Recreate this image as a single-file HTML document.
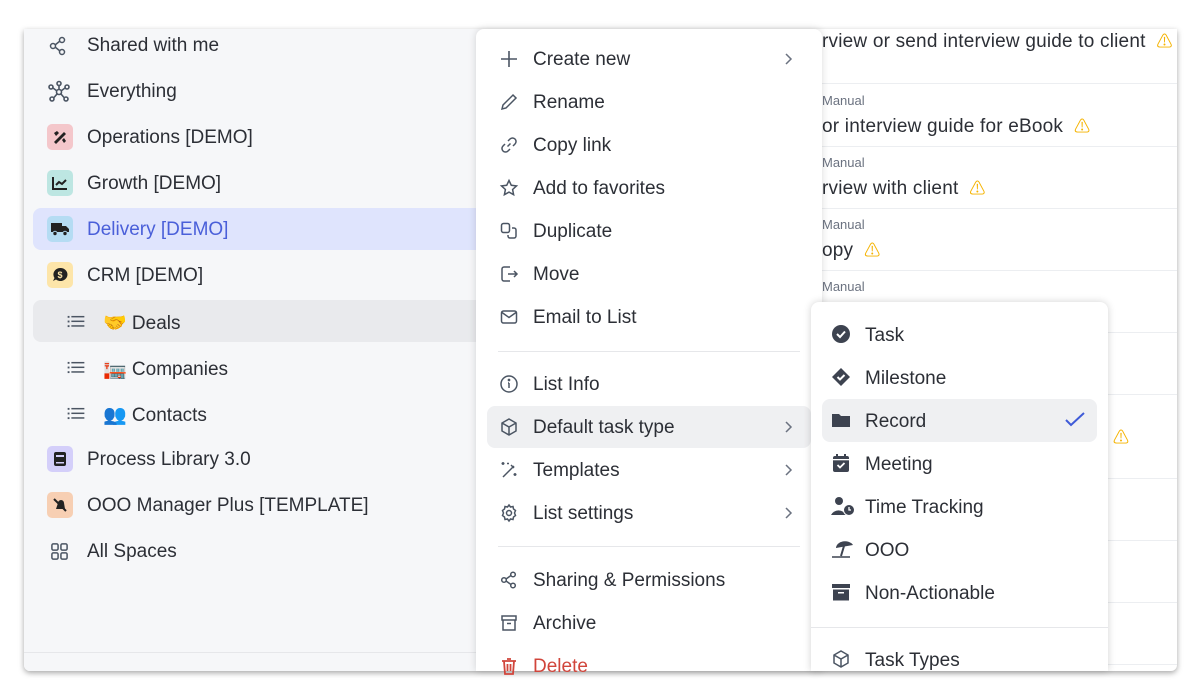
<!DOCTYPE html>
<html><head><meta charset="utf-8">
<style>
*{box-sizing:border-box;margin:0;padding:0}
body{width:1200px;height:700px;background:#fff;font-family:"Liberation Sans","Noto Sans CJK JP",sans-serif;position:relative;overflow:hidden;color:#2c2f36}
.win{position:absolute;left:24px;top:29px;width:1153px;height:642px;border-radius:0 0 6px 6px;box-shadow:0 2px 6px rgba(0,0,0,.35);overflow:hidden;background:#fff}
.side{position:absolute;left:0;top:0;width:460px;height:642px;background:#f6f7f9}
.side .bl{position:absolute;left:0;top:623px;width:460px;border-top:1px solid #e6e7ea}
.row{position:absolute;left:9px;width:450px;height:42px;font-size:19px;letter-spacing:0;color:#2c2f36;border-radius:8px}
.row .ic{position:absolute;left:14px;top:8px;width:26px;height:26px;border-radius:5px;display:flex;align-items:center;justify-content:center}
.row .oi{position:absolute}
.row .tx{position:absolute;left:54px;top:11px;white-space:nowrap}
.row.sub .tx{left:70px}
.content{position:absolute;left:798px;top:0;width:355px;height:642px}
.cr{position:absolute;left:0;width:355px;border-top:1px solid #eceef1}
.manual{position:absolute;left:0;font-size:13px;color:#6b7280}
.ct{position:absolute;left:0;font-size:19px;color:#2c2f36;white-space:nowrap;letter-spacing:.2px}
.menu{position:absolute;left:476px;top:29px;width:346px;height:642px;background:#fff;border-radius:8px 8px 0 0;box-shadow:0 0 8px rgba(0,0,0,.15)}
.mi{position:absolute;left:11px;width:324px;height:42px;border-radius:8px;font-size:19px;letter-spacing:0;color:#2c2f36}
.mi svg{position:absolute;left:12px;top:11px}
.mi .tx{position:absolute;left:46px;top:11px}
.mi .ch{position:absolute;left:296px;top:14px}
.div{position:absolute;left:22px;width:302px;border-top:1px solid #e6e7ea}
.sm{position:absolute;left:811px;top:302px;width:297px;height:369px;background:#fff;border-radius:8px 8px 0 0;box-shadow:0 0 8px rgba(0,0,0,.18)}
.si{position:absolute;left:11px;width:275px;height:43px;border-radius:8px;font-size:19px;letter-spacing:0;color:#2c2f36}
.si svg{position:absolute;left:9px;top:11px}
.si .tx{position:absolute;left:43px;top:12px}
.warn{color:#f5b301;font-size:16px}
</style></head><body>
<div class="win">
 <div class="side">
  <div class="row" style="top:-5px"><svg class="oi" style="left:15px;top:12px" width="20" height="20" viewBox="0 0 20 20" fill="none" stroke="#4b5563" stroke-width="1.5"><circle cx="5" cy="10" r="2.5"/><circle cx="14" cy="4" r="2.5"/><circle cx="14" cy="16" r="2.5"/><path d="M7 9l5-4M7 11l5 4"/></svg><span class="tx">Shared with me</span></div>
  <div class="row" style="top:41px"><svg class="oi" style="left:14px;top:10px" width="24" height="24" viewBox="0 0 24 24" fill="none" stroke="#4b5563" stroke-width="1.6"><circle cx="12" cy="12" r="2.5"/><circle cx="12" cy="3.5" r="2"/><circle cx="4" cy="7" r="2"/><circle cx="20" cy="7" r="2"/><circle cx="5" cy="19" r="2"/><circle cx="19" cy="19" r="2"/><path d="M12 5.5v4M6 8l4 3M18 8l-4 3M7 17.5l3-3.5M17 17.5l-3-3.5"/></svg><span class="tx">Everything</span></div>
  <div class="row" style="top:87px"><div class="ic" style="background:#f4c7cb"><svg width="16" height="16" viewBox="0 0 16 16"><path d="M2 13l10-10 2 2-10 10z M2 4l3-2 2 2-3 3z M10 11l2-2 2 3-2 2z" fill="#222"/></svg></div><span class="tx">Operations [DEMO]</span></div>
  <div class="row" style="top:133px"><div class="ic" style="background:#bde6e2"><svg width="18" height="16" viewBox="0 0 18 16" fill="none" stroke="#222" stroke-width="2"><path d="M2 2v12h14M5 10l3-3 3 2 4-4"/></svg></div><span class="tx">Growth [DEMO]</span></div>
  <div class="row" style="top:179px;background:#dfe4fd"><div class="ic" style="background:#b5dcf3"><svg width="20" height="16" viewBox="0 0 20 16"><path d="M1 2h11v9H1zM12 5h4l3 3v3h-7z" fill="#222"/><circle cx="5" cy="12.5" r="2.2" fill="#222" stroke="#b5dcf3"/><circle cx="15" cy="12.5" r="2.2" fill="#222" stroke="#b5dcf3"/></svg></div><span class="tx" style="color:#4a5fd9">Delivery [DEMO]</span></div>
  <div class="row" style="top:225px"><div class="ic" style="background:#fde5a9"><svg width="16" height="16" viewBox="0 0 16 16"><path d="M8 1a7 6.5 0 1 1-4 11.5L1 14l1.5-3A7 6.5 0 0 1 8 1z" fill="#222"/><text x="8" y="11" font-size="9" fill="#fde5a9" text-anchor="middle" font-weight="bold">$</text></svg></div><span class="tx">CRM [DEMO]</span></div>
  <div class="row sub" style="top:271px;background:#e9eaed"><svg class="oi" style="left:34px;top:15px" width="18" height="13" viewBox="0 0 18 14" fill="#4b5563"><rect x="0" y="1" width="2" height="2"/><rect x="0" y="6" width="2" height="2"/><rect x="0" y="11" width="2" height="2"/><rect x="4" y="1" width="14" height="1.6"/><rect x="4" y="6" width="14" height="1.6"/><rect x="4" y="11" width="14" height="1.6"/></svg><span class="tx">🤝 Deals</span></div>
  <div class="row sub" style="top:317px"><svg class="oi" style="left:34px;top:15px" width="18" height="13" viewBox="0 0 18 14" fill="#4b5563"><rect x="0" y="1" width="2" height="2"/><rect x="0" y="6" width="2" height="2"/><rect x="0" y="11" width="2" height="2"/><rect x="4" y="1" width="14" height="1.6"/><rect x="4" y="6" width="14" height="1.6"/><rect x="4" y="11" width="14" height="1.6"/></svg><span class="tx">🏣 Companies</span></div>
  <div class="row sub" style="top:363px"><svg class="oi" style="left:34px;top:15px" width="18" height="13" viewBox="0 0 18 14" fill="#4b5563"><rect x="0" y="1" width="2" height="2"/><rect x="0" y="6" width="2" height="2"/><rect x="0" y="11" width="2" height="2"/><rect x="4" y="1" width="14" height="1.6"/><rect x="4" y="6" width="14" height="1.6"/><rect x="4" y="11" width="14" height="1.6"/></svg><span class="tx">👥 Contacts</span></div>
  <div class="row" style="top:409px"><div class="ic" style="background:#d4cffa"><svg width="14" height="16" viewBox="0 0 14 16"><rect x="1" y="1" width="12" height="14" rx="2" fill="#222"/><rect x="3" y="4" width="8" height="2" fill="#d4cffa"/><rect x="3" y="11" width="8" height="1.5" fill="#d4cffa"/></svg></div><span class="tx">Process Library 3.0</span></div>
  <div class="row" style="top:455px"><div class="ic" style="background:#f7cfb3"><svg width="16" height="16" viewBox="0 0 16 16"><path d="M4 12l2-6a3 3 0 0 1 6 0l1 6z" fill="#222"/><path d="M2 2l12 12" stroke="#222" stroke-width="2"/></svg></div><span class="tx">OOO Manager Plus [TEMPLATE]</span></div>
  <div class="row" style="top:501px"><svg class="oi" style="left:17px;top:12px" width="19" height="19" viewBox="0 0 20 20" fill="none" stroke="#4b5563" stroke-width="1.6"><rect x="2" y="2" width="6.5" height="6.5" rx="1.5"/><rect x="11.5" y="2" width="6.5" height="6.5" rx="1.5"/><rect x="2" y="11.5" width="6.5" height="6.5" rx="1.5"/><rect x="11.5" y="11.5" width="6.5" height="6.5" rx="1.5"/></svg><span class="tx">All Spaces</span></div>
  <div class="bl"></div>
 </div>
 <div class="content">
  <div class="ct" style="top:-1px">rview or send interview guide to client &nbsp;<span class="warn">⚠</span></div>
  <div class="cr" style="top:54px"></div>
  <div class="manual" style="top:64px">Manual</div>
  <div class="ct" style="top:84px">or interview guide for eBook &nbsp;<span class="warn">⚠</span></div>
  <div class="cr" style="top:117px"></div>
  <div class="manual" style="top:126px">Manual</div>
  <div class="ct" style="top:146px">rview with client &nbsp;<span class="warn">⚠</span></div>
  <div class="cr" style="top:179px"></div>
  <div class="manual" style="top:188px">Manual</div>
  <div class="ct" style="top:208px">opy &nbsp;<span class="warn">⚠</span></div>
  <div class="cr" style="top:241px"></div>
  <div class="manual" style="top:250px">Manual</div>
  <div class="cr" style="top:303px"></div>
  <div class="cr" style="top:365px"></div>
  <div class="warn" style="position:absolute;left:291px;top:395px">⚠</div>
  <div class="cr" style="top:449px"></div>
  <div class="cr" style="top:511px"></div>
  <div class="cr" style="top:573px"></div>
  <div class="cr" style="top:635px"></div>
 </div>
</div>

<div class="menu">
 <div class="mi" style="top:9px"><svg width="20" height="20" viewBox="0 0 20 20" fill="none" stroke="#4b5563" stroke-width="1.6"><path d="M10 2v16M2 10h16"/></svg><span class="tx">Create new</span><svg class="ch" width="10" height="14" viewBox="0 0 10 14" fill="none" stroke="#6b7280" stroke-width="1.5"><path d="M3 2l5 5-5 5"/></svg></div>
 <div class="mi" style="top:52px"><svg width="20" height="20" viewBox="0 0 20 20" fill="none" stroke="#4b5563" stroke-width="1.5"><path d="M3 17l1-4L14 3l3 3L7 16z"/></svg><span class="tx">Rename</span></div>
 <div class="mi" style="top:95px"><svg width="20" height="20" viewBox="0 0 20 20" fill="none" stroke="#4b5563" stroke-width="1.5"><path d="M8.5 11.5l3-3M9 6l2-2a3 3 0 0 1 5 5l-2 2M11 14l-2 2a3 3 0 0 1-5-5l2-2"/></svg><span class="tx">Copy link</span></div>
 <div class="mi" style="top:138px"><svg width="20" height="20" viewBox="0 0 20 20" fill="none" stroke="#4b5563" stroke-width="1.5"><path d="M10 2.5l2.3 4.8 5.2.6-3.9 3.6 1 5.2L10 14.1l-4.6 2.6 1-5.2-3.9-3.6 5.2-.6z"/></svg><span class="tx">Add to favorites</span></div>
 <div class="mi" style="top:181px"><svg width="20" height="20" viewBox="0 0 20 20" fill="none" stroke="#4b5563" stroke-width="1.5"><rect x="2.5" y="2.5" width="8" height="9" rx="2"/><path d="M13 7h2a2 2 0 0 1 2 2v6a2 2 0 0 1-2 2H11a2 2 0 0 1-2-2v-1"/></svg><span class="tx">Duplicate</span></div>
 <div class="mi" style="top:224px"><svg width="20" height="20" viewBox="0 0 20 20" fill="none" stroke="#4b5563" stroke-width="1.5"><path d="M11 3H5a2 2 0 0 0-2 2v10a2 2 0 0 0 2 2h6M9 10h9M15 7l3 3-3 3"/></svg><span class="tx">Move</span></div>
 <div class="mi" style="top:267px"><svg width="20" height="20" viewBox="0 0 20 20" fill="none" stroke="#4b5563" stroke-width="1.5"><rect x="2.5" y="4" width="15" height="12" rx="2"/><path d="M3 5.5l7 5 7-5"/></svg><span class="tx">Email to List</span></div>
 <div class="div" style="top:322px"></div>
 <div class="mi" style="top:334px"><svg width="20" height="20" viewBox="0 0 20 20" fill="none" stroke="#4b5563" stroke-width="1.5"><circle cx="10" cy="10" r="8"/><path d="M10 9v5M9 9h1"/><circle cx="10" cy="6" r=".6" fill="#4b5563"/></svg><span class="tx">List Info</span></div>
 <div class="mi" style="top:377px;background:#eff0f2"><svg width="20" height="20" viewBox="0 0 20 20" fill="none" stroke="#4b5563" stroke-width="1.5"><path d="M10 2l7 4v8l-7 4-7-4V6zM3 6l7 4 7-4M10 10v8"/></svg><span class="tx">Default task type</span><svg class="ch" width="10" height="14" viewBox="0 0 10 14" fill="none" stroke="#6b7280" stroke-width="1.5"><path d="M3 2l5 5-5 5"/></svg></div>
 <div class="mi" style="top:420px"><svg width="20" height="20" viewBox="0 0 20 20" fill="none" stroke="#4b5563" stroke-width="1.5"><path d="M4 17L15 6M12 5l3 3M4 2v3M2.5 3.5h3M16 13v3M14.5 14.5h3M8 3.5h2"/></svg><span class="tx">Templates</span><svg class="ch" width="10" height="14" viewBox="0 0 10 14" fill="none" stroke="#6b7280" stroke-width="1.5"><path d="M3 2l5 5-5 5"/></svg></div>
 <div class="mi" style="top:463px"><svg width="20" height="20" viewBox="0 0 20 20" fill="none" stroke="#4b5563" stroke-width="1.5"><circle cx="10" cy="10" r="2.5"/><path d="M10 2l1.5 2 2.5-.5.5 2.5 2 1.5-1 2.5 1 2.5-2 1.5-.5 2.5-2.5-.5L10 18l-1.5-2-2.5.5-.5-2.5-2-1.5 1-2.5-1-2.5 2-1.5.5-2.5 2.5.5z"/></svg><span class="tx">List settings</span><svg class="ch" width="10" height="14" viewBox="0 0 10 14" fill="none" stroke="#6b7280" stroke-width="1.5"><path d="M3 2l5 5-5 5"/></svg></div>
 <div class="div" style="top:517px"></div>
 <div class="mi" style="top:530px"><svg width="20" height="20" viewBox="0 0 20 20" fill="none" stroke="#4b5563" stroke-width="1.5"><circle cx="5" cy="10" r="2.3"/><circle cx="14" cy="4.5" r="2.3"/><circle cx="14" cy="15.5" r="2.3"/><path d="M7 9l5-3.5M7 11l5 3.5"/></svg><span class="tx">Sharing &amp; Permissions</span></div>
 <div class="mi" style="top:573px"><svg width="20" height="20" viewBox="0 0 20 20" fill="none" stroke="#4b5563" stroke-width="1.5"><rect x="3" y="3" width="14" height="4"/><path d="M4 7v10h12V7M8 10.5h4"/></svg><span class="tx">Archive</span></div>
 <div class="mi" style="top:616px;color:#d1453b"><svg width="20" height="20" viewBox="0 0 20 20" fill="none" stroke="#d1453b" stroke-width="1.8"><path d="M3 5h14M8 3h4M5 5l1 13h8l1-13M8.5 8v7M11.5 8v7"/></svg><span class="tx">Delete</span></div>
</div>

<div class="sm">
 <div class="si" style="top:11px"><svg width="20" height="20" viewBox="0 0 20 20"><circle cx="10" cy="10" r="9" fill="#3d4350"/><path d="M6 10l3 3 5-5.5" fill="none" stroke="#fff" stroke-width="2"/></svg><span class="tx">Task</span></div>
 <div class="si" style="top:54px"><svg width="20" height="20" viewBox="0 0 20 20"><path d="M10 1l9 9-9 9-9-9z" fill="#3d4350"/><path d="M6.5 10l2.5 2.5 4.5-4.5" fill="none" stroke="#fff" stroke-width="2"/></svg><span class="tx">Milestone</span></div>
 <div class="si" style="top:97px;background:#eff0f2"><svg width="20" height="20" viewBox="0 0 20 20"><path d="M1 4h7l2 2h9v11H1z" fill="#3d4350"/></svg><span class="tx">Record</span><svg style="left:242px;top:12px" width="22" height="18" viewBox="0 0 22 18" fill="none" stroke="#3f5bd8" stroke-width="2"><path d="M2 9l5 5L20 2"/></svg></div>
 <div class="si" style="top:140px"><svg width="20" height="20" viewBox="0 0 20 20"><rect x="2" y="3" width="16" height="16" rx="2" fill="#3d4350"/><rect x="5" y="1" width="2" height="4" fill="#3d4350"/><rect x="13" y="1" width="2" height="4" fill="#3d4350"/><rect x="2" y="6" width="16" height="1.3" fill="#fff"/><path d="M6.5 12l2.5 2.5 4.5-4.5" fill="none" stroke="#fff" stroke-width="1.8"/></svg><span class="tx">Meeting</span></div>
 <div class="si" style="top:183px"><svg width="24" height="20" viewBox="0 0 24 20"><circle cx="8" cy="5" r="4" fill="#3d4350"/><path d="M0 19a8 7 0 0 1 15 0z" fill="#3d4350"/><circle cx="18" cy="14" r="5.5" fill="#3d4350" stroke="#fff"/><path d="M18 11v3h2" stroke="#fff" stroke-width="1.3" fill="none"/></svg><span class="tx">Time Tracking</span></div>
 <div class="si" style="top:226px"><svg width="24" height="20" viewBox="0 0 24 20"><path d="M5 9a9 7 0 0 1 17 -3z" fill="#3d4350"/><path d="M13 7l-3 10" stroke="#3d4350" stroke-width="2"/><path d="M1 18h18" stroke="#3d4350" stroke-width="1.6"/></svg><span class="tx">OOO</span></div>
 <div class="si" style="top:269px"><svg width="20" height="20" viewBox="0 0 20 20"><rect x="1" y="2" width="18" height="4" fill="#3d4350"/><rect x="2" y="7.5" width="16" height="11" fill="#3d4350"/><rect x="7" y="10" width="6" height="1.5" fill="#fff"/></svg><span class="tx">Non-Actionable</span></div>
 <div style="position:absolute;left:0;top:325px;width:297px;border-top:1px solid #e6e7ea"></div>
 <div class="si" style="top:336px"><svg width="20" height="20" viewBox="0 0 20 20" fill="none" stroke="#4b5563" stroke-width="1.5"><path d="M10 2l7 4v8l-7 4-7-4V6zM3 6l7 4 7-4M10 10v8"/></svg><span class="tx">Task Types</span></div>
</div>
</body></html>
